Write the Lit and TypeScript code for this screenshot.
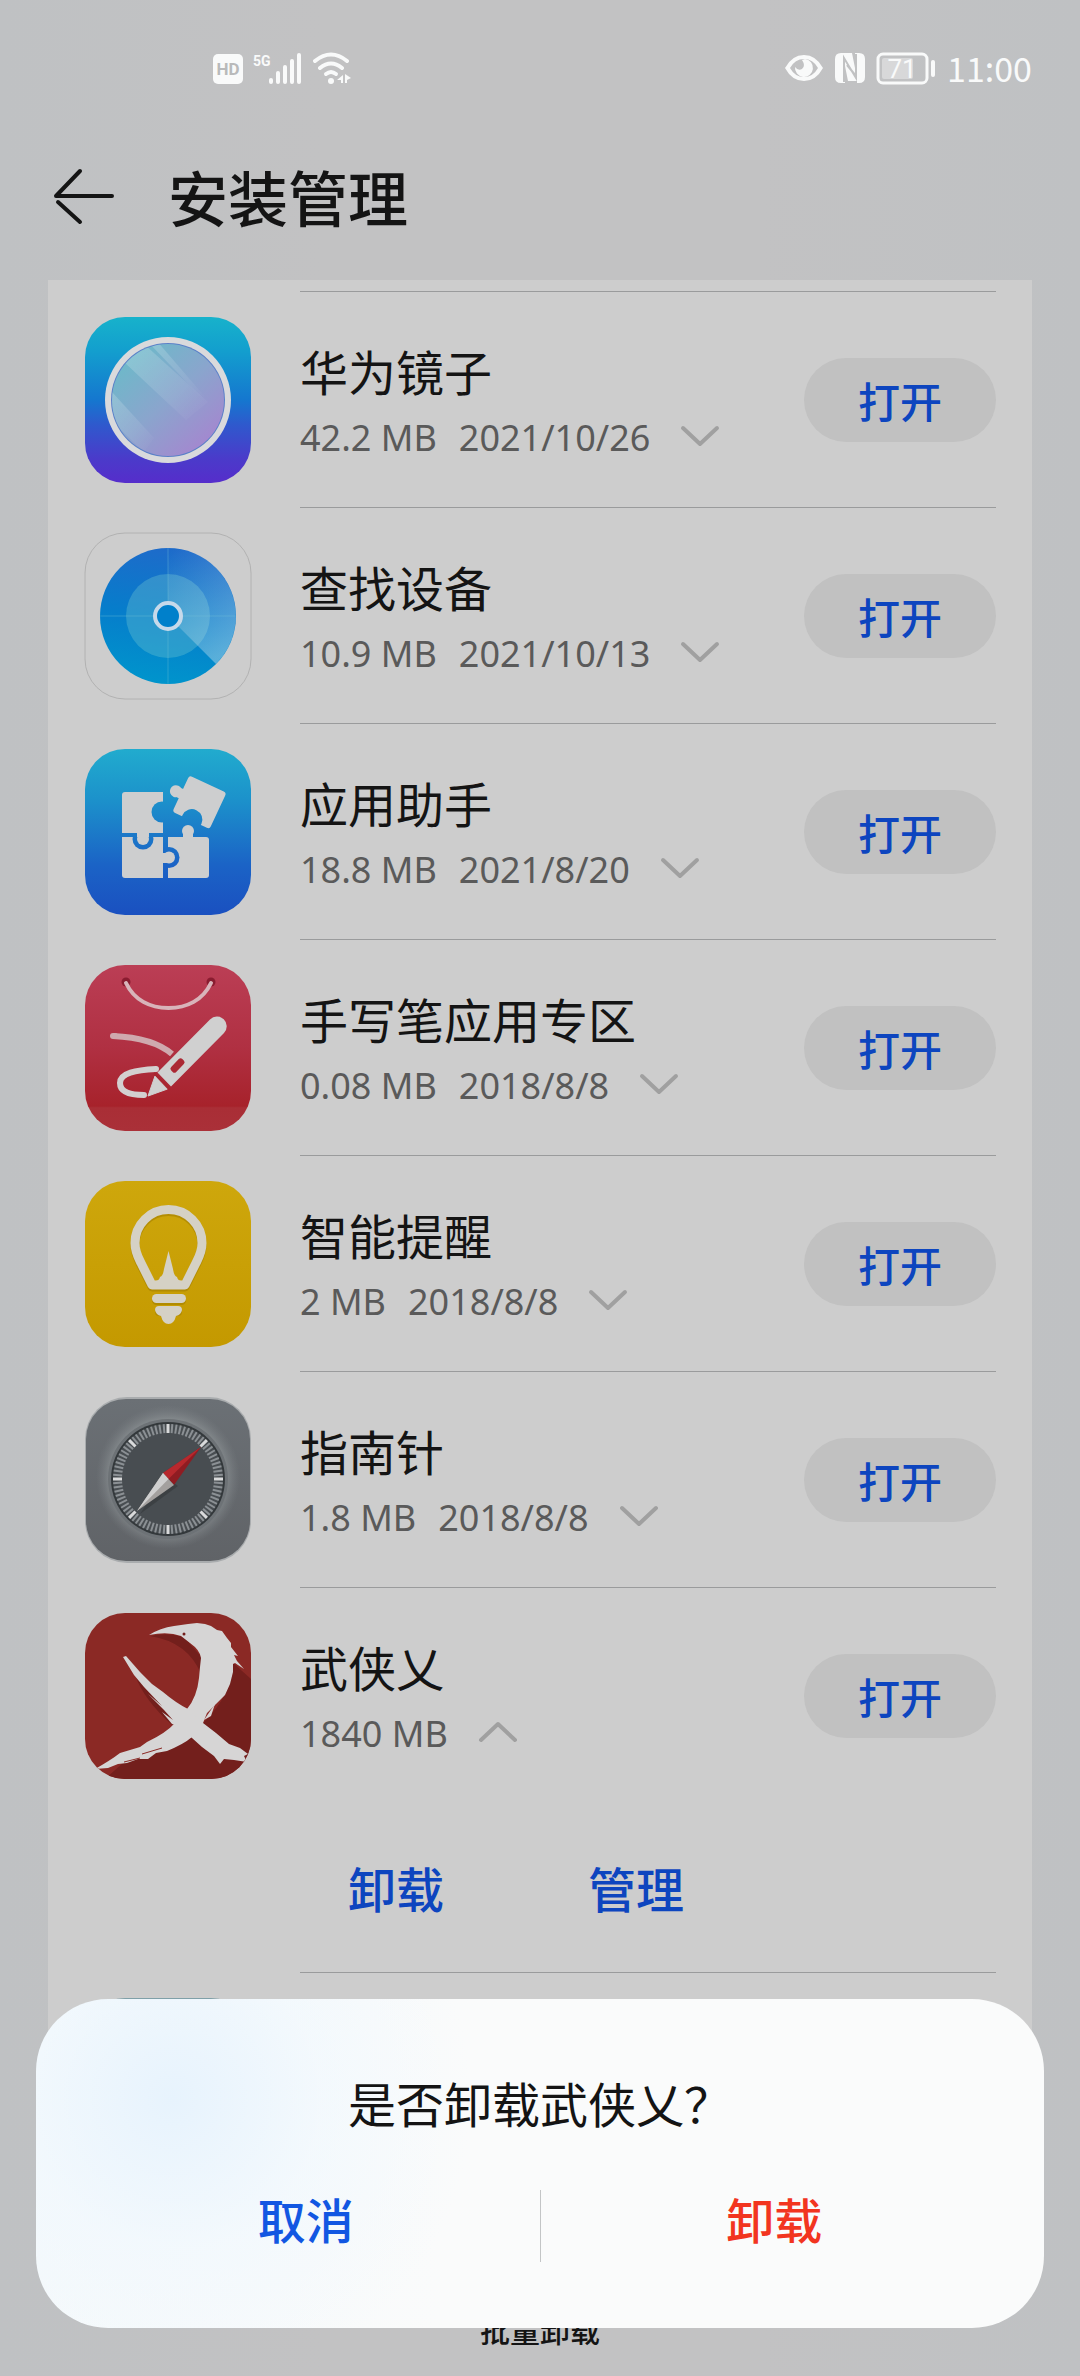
import { LitElement, html, svg, css, nothing, TemplateResult } from "lit";
import { customElement, property, state } from "lit/decorators.js";

type IconName =
  | "mirror"
  | "radar"
  | "puzzle"
  | "stylus"
  | "bulb"
  | "compass"
  | "brush"
  | "plain";

interface AppItem {
  icon: IconName;
  name: string;
  size: string;
  date?: string;
  expanded?: boolean;
}

const APPS: AppItem[] = [
  { icon: "mirror", name: "华为镜子", size: "42.2 MB", date: "2021/10/26" },
  { icon: "radar", name: "查找设备", size: "10.9 MB", date: "2021/10/13" },
  { icon: "puzzle", name: "应用助手", size: "18.8 MB", date: "2021/8/20" },
  { icon: "stylus", name: "手写笔应用专区", size: "0.08 MB", date: "2018/8/8" },
  { icon: "bulb", name: "智能提醒", size: "2 MB", date: "2018/8/8" },
  { icon: "compass", name: "指南针", size: "1.8 MB", date: "2018/8/8" },
  { icon: "brush", name: "武侠乂", size: "1840 MB", expanded: true },
];

const ticks = Array.from({ length: 80 }, (_, i) => ({
  angle: i * 4.5,
  major: i % 10 === 0,
}));

const tile = (fill: string) =>
  svg`<rect x="1" y="1" width="166" height="166" rx="40" fill=${fill} />`;

const ICONS: Record<IconName, () => TemplateResult> = {
  mirror: () => svg`
    <defs>
      <linearGradient id="bg" x1="0" y1="0" x2="0" y2="1">
        <stop offset="0" stop-color="#17b2cb" />
        <stop offset=".2" stop-color="#139fce" />
        <stop offset=".5" stop-color="#1577cf" />
        <stop offset=".65" stop-color="#2f59cd" />
        <stop offset=".85" stop-color="#4a3bca" />
        <stop offset="1" stop-color="#562dcb" />
      </linearGradient>
      <linearGradient id="glass" x1=".15" y1=".1" x2=".85" y2=".9">
        <stop offset="0" stop-color="#6db9c9" />
        <stop offset=".5" stop-color="#8aa5cd" />
        <stop offset="1" stop-color="#a487cf" />
      </linearGradient>
      <linearGradient id="shine" x1="0" y1="0" x2="1" y2="1">
        <stop offset="0" stop-color="#fff" stop-opacity=".22" />
        <stop offset="1" stop-color="#fff" stop-opacity="0" />
      </linearGradient>
      <clipPath id="disc"><circle cx="84" cy="84" r="56" /></clipPath>
    </defs>
    ${tile("url(#bg)")}
    <circle cx="84" cy="84" r="63" fill="#d9dadc" />
    <circle cx="84" cy="84" r="57" fill="#5a80c8" />
    <circle cx="84" cy="84" r="56" fill="url(#glass)" />
    <g clip-path="url(#disc)">
      <path d="M40 46L60 28L124 86L102 104Z" fill="url(#shine)" />
      <path d="M64 26L72 24L122 82L116 80Z" fill="url(#shine)" />
      <path d="M28 76L70 122L60 136L20 98Z" fill="url(#shine)" />
    </g>`,
  radar: () => svg`
    <defs>
      <linearGradient id="sea" x1=".5" y1="0" x2=".35" y2="1">
        <stop offset="0" stop-color="#1e6bca" />
        <stop offset=".5" stop-color="#067dcb" />
        <stop offset="1" stop-color="#0095cc" />
      </linearGradient>
      <linearGradient id="beam" x1=".1" y1="0" x2=".6" y2="1">
        <stop offset="0" stop-color="#cfe4ee" stop-opacity="0" />
        <stop offset="1" stop-color="#cfe4ee" stop-opacity=".42" />
      </linearGradient>
    </defs>
    <rect x="1" y="1" width="166" height="166" rx="40" fill="#cdcdcd" stroke="#b2b2b2" />
    <circle cx="84" cy="84" r="68" fill="url(#sea)" />
    <circle cx="84" cy="84" r="42" fill="#6fc6cf" fill-opacity=".36" />
    <path d="M84 84V16A68 68 0 0 1 132 132Z" fill="url(#beam)" />
    <path d="M84 16V152M16 84H152" stroke="#7cc2d6" stroke-opacity=".35" fill="none" />
    <circle cx="84" cy="84" r="13" fill="#0080cb" stroke="#c6d9ea" stroke-width="4" />`,
  puzzle: () => svg`
    <defs>
      <linearGradient id="bg" x1="0" y1="0" x2="0" y2="1">
        <stop offset="0" stop-color="#21abce" />
        <stop offset=".3" stop-color="#1c92cb" />
        <stop offset=".7" stop-color="#1b63c6" />
        <stop offset="1" stop-color="#1a50c0" />
      </linearGradient>
      <mask id="pieces">
        <rect width="168" height="168" fill="#000" />
        <rect x="84" y="89" width="41" height="41" rx="3" fill="#fff" />
        <rect x="84" y="89" width="12" height="41" fill="#fff" />
        <circle cx="85" cy="109.500" r="10.500" fill="#000" />
        <rect x="38" y="89" width="41" height="41" rx="3" fill="#fff" />
        <rect x="60" y="89" width="19" height="41" fill="#fff" />
        <rect x="38" y="89" width="41" height="10" fill="#fff" />
        <circle cx="59" cy="91" r="10.500" fill="#000" />
        <rect x="38" y="44" width="41" height="41" rx="3" fill="#fff" />
        <rect x="60" y="44" width="19" height="41" fill="#fff" />
        <rect x="38" y="60" width="41" height="25" fill="#fff" />
        <circle cx="78" cy="64" r="10.500" fill="#000" />
        <rect x="53" y="84" width="12" height="5" fill="#fff" />
        <circle cx="59" cy="91" r="6" fill="#fff" />
        <rect x="78" y="105" width="5" height="10" fill="#fff" />
        <circle cx="85" cy="109.500" r="6" fill="#fff" />
        <g transform="translate(115 54) rotate(25)">
          <rect x="-20" y="-20" width="41" height="40" rx="3" fill="#fff" />
          <circle cx="1" cy="19" r="10.500" fill="#000" />
          <rect x="-24" y="-5" width="6" height="10" fill="#fff" />
          <circle cx="-25.500" cy="0" r="6" fill="#fff" />
        </g>
        <rect x="99" y="85" width="10" height="5" fill="#fff" />
        <circle cx="104" cy="83" r="6" fill="#fff" />
      </mask>
    </defs>
    ${tile("url(#bg)")}
    <rect width="168" height="168" fill="#cdcecf" mask="url(#pieces)" />`,
  stylus: () => svg`
    <defs>
      <linearGradient id="bg" x1="0" y1="0" x2="0" y2="1">
        <stop offset="0" stop-color="#bb3e55" />
        <stop offset=".5" stop-color="#b03042" />
        <stop offset=".85" stop-color="#a7222b" />
        <stop offset=".86" stop-color="#a92e36" />
        <stop offset="1" stop-color="#aa3038" />
      </linearGradient>
    </defs>
    ${tile("url(#bg)")}
    <circle cx="42" cy="18" r="4.500" fill="#8a1c30" />
    <circle cx="127" cy="18" r="4.500" fill="#8a1c30" />
    <g fill="none" stroke-linecap="round">
      <path d="M42 19C50 36 66 44 84.500 44S119 36 127 19" stroke="#d8b4ba" stroke-width="4" />
      <path d="M29 72C52 73 74 78 88 90" stroke="#cfa9ae" stroke-width="6" stroke-linecap="butt" />
      <path d="M29 72H31" stroke="#cfa9ae" stroke-width="6" />
      <path d="M60 131C44 131 36 127 36 119C36 109 52 106 72 105" stroke="#d3d0d0" stroke-width="6" />
    </g>
    <path d="M73.500 108.500L126 55.500A9.500 9.500 0 0 1 140 69L87 122.500Z" fill="#d0d0d0" />
    <rect x="-8" y="-3.500" width="16" height="7" rx="2.500" transform="translate(93.500 101.500) rotate(-46)" fill="#ab2934" />
    <path d="M71 112L83.500 125L64 132Z" fill="#d0d0d0" stroke="#d0d0d0" stroke-linejoin="round" />
    <path d="M70 109L86 126" stroke="#a9262f" stroke-width="2" />`,
  bulb: () => svg`
    <defs>
      <linearGradient id="bg" x1="0" y1="0" x2="0" y2="1">
        <stop offset="0" stop-color="#cea70c" />
        <stop offset="1" stop-color="#c49900" />
      </linearGradient>
    </defs>
    ${tile("url(#bg)")}
    <g transform="translate(0 2)" fill="#a98400" stroke="none" opacity=".7">
      <path d="M68 105L57 83C54 77 51 72 51 63A33.500 33.500 0 0 1 118 63C118 72 115 77 112 83L101 105Z" fill="none" stroke="#a98400" stroke-width="9" stroke-linejoin="round" />
      <rect x="68" y="114" width="34" height="9" rx="4.500" />
      <rect x="71" y="126" width="27" height="8" rx="4" />
    </g>
    <path d="M68 105L57 83C54 77 51 72 51 63A33.500 33.500 0 0 1 118 63C118 72 115 77 112 83L101 105Z" fill="none" stroke="#d5d1c5" stroke-width="9" stroke-linejoin="round" />
    <path d="M84.500 71L80 89Q79 96 76 97Q75 101 71 101V106H98V101Q94 101 93 97Q90 96 89 89Z" fill="#d5d1c5" />
    <rect x="68" y="114" width="34" height="9" rx="4.500" fill="#d5d1c5" />
    <path d="M75 126H94Q98 126 98 130Q97 135 92 136Q90 144 84.500 144T77 136Q72 135 71 130Q71 126 75 126Z" fill="#d5d1c5" />`,
  compass: () => svg`
    <defs>
      <linearGradient id="bg" x1="0" y1="0" x2="0" y2="1">
        <stop offset="0" stop-color="#6b7075" />
        <stop offset="1" stop-color="#606367" />
      </linearGradient>
      <radialGradient id="halo">
        <stop offset=".75" stop-color="#92989a" stop-opacity=".9" />
        <stop offset="1" stop-color="#7b8084" stop-opacity="0" />
      </radialGradient>
    </defs>
    <rect x="1" y="1" width="166" height="166" rx="42" fill="#a9acae" />
    <rect x="2" y="3" width="164" height="162" rx="40" fill="url(#bg)" />
    <circle cx="84" cy="81" r="72" fill="url(#halo)" />
    <circle cx="84" cy="83" r="60" fill="#6d7276" />
    <circle cx="84" cy="83" r="57" fill="#33383b" />
    <circle cx="84" cy="83" r="55" fill="#484d51" />
    ${ticks.map(
      (t) => svg`<path
        d="M84 28V37"
        transform="rotate(${t.angle} 84 83)"
        stroke=${t.major ? "#d9dadb" : "#8b9094"}
        stroke-width=${t.major ? 3 : 2} />`
    )}
    <path d="M81 80L56 118L94 90Z" fill="#2f3336" opacity=".5" />
    <path d="M79 77L117 51L90 89Z" fill="#8f1c22" />
    <path d="M79 77L117 51L84.500 83Z" fill="#b8282d" />
    <path d="M79 77L53 115L90 89Z" fill="#a3a09e" />
    <path d="M79 77L53 115L84.500 83Z" fill="#cfcfcf" />`,
  brush: () => svg`
    <defs>
      <clipPath id="tile"><rect x="1" y="1" width="166" height="166" rx="40" /></clipPath>
    </defs>
    <g clip-path="url(#tile)">
      <rect width="168" height="168" fill="#8b2925" />
      <path d="M148 50L168 68V168H20L40 150L110 122L120 110Q150 80 148 50Z" fill="#731f1c" />
      <path d="M66 24Q84 20 100 25L120 48L117 62Q104 30 66 24Z" fill="#731f1c" />
      <path d="M51 63Q60 88 88 113L96 108Q70 86 56 62Z" fill="#731f1c" />
      <path d="M65 23Q76 16 90 14L104 12L113 11L121 12L127 14L133 18L138 19L143 26L147 31L147 35L154 44L150 43L153 49L160 57L151 51L149 52L149 60L146 72L141 83L132 92L123 101L119 111L108 125Q100 132 83 139L72 141L64 147L54 147L43 151L34 152L24 156L11 157Q27 148 36 141L56 135L63 130Q82 121 91 111L103 97Q113 85 115 66L116 55L117 46Q116 38 106 31L97 24Q84 19 65 23Z" fill="#d6d5d5" />
      <path d="M39 45L42 44L56 60L68 72L79 80Q92 91 104 97L119 111L132 121L145 132L156 136L164 142L160 144L163 150L150 148L140 147L136 152L130 144L118 135L108 126L96 114L88 112L78 100L89 108L80 98L64 82L78 94L60 75L50 63Z" fill="#d6d5d5" />
      <path d="M120 108L131 92L127 104Z" fill="#d6d5d5" />
      <path d="M58 142L78 136M40 150L56 146" stroke="#8b2925" fill="none" />
      <circle cx="100" cy="22" r="1.500" fill="#731f1c" />
    </g>`,
  plain: () => tile("#7fa0a8"),
};

@customElement("app-icon")
class AppIcon extends LitElement {
  @property() name: IconName = "plain";

  static styles = css`
    :host {
      display: block;
      width: 168px;
      height: 168px;
    }
    .art {
      display: block;
      width: 100%;
      height: 100%;
    }
  `;

  render() {
    return html`<svg class="art" viewBox="0 0 168 168" aria-hidden="true">
      ${ICONS[this.name]()}
    </svg>`;
  }
}

@customElement("status-bar")
class StatusBar extends LitElement {
  static styles = css`
    :host {
      display: flex;
      align-items: center;
      height: 36px;
      padding: 50px 48px;
      padding-left: 213px;
      color: #f9fafa;
      fill: currentColor;
    }
    .group {
      display: flex;
      align-items: center;
      gap: 10px;
    }
    .right {
      margin-left: auto;
      gap: 11px;
    }
    .small {
      font-family: Roboto, "Liberation Sans", sans-serif;
      font-weight: 700;
    }
    .level {
      font-family: Roboto, "Liberation Sans", sans-serif;
      font-size: 26px;
      font-weight: 400;
    }
    .clock {
      font: 400 34px/36px "Noto Sans CJK SC", sans-serif;
    }
    .line {
      fill: none;
      stroke: currentColor;
      stroke-linecap: round;
    }
  `;

  render() {
    return html`
      <div class="group">
        <svg width="30" height="32" viewBox="0 0 30 32">
          <rect y="2" width="30" height="30" rx="5" />
          <text class="small" x="15" y="23" font-size="17" fill="#b9babb" text-anchor="middle">HD</text>
        </svg>
        <svg width="50" height="32" viewBox="0 0 50 32">
          <text class="small" x="0" y="14" font-size="14">5G</text>
          <rect x="16" y="26" width="4" height="6" rx="2" />
          <rect x="23" y="19" width="4" height="13" rx="2" />
          <rect x="30" y="13" width="4" height="19" rx="2" />
          <rect x="37" y="7" width="4" height="25" rx="2" />
          <rect x="44" y="1" width="4" height="31" rx="2" />
        </svg>
        <svg width="40" height="32" viewBox="0 0 40 32">
          <path class="line" stroke-width="4" d="M2 9Q18 -4 34 9M7 16Q18 7 29 16" />
          <path class="line" stroke-width="4" d="M13 22Q18 18 23 22" />
          <circle cx="18" cy="29" r="3" />
          <path d="M30 23V31H28V28H24ZM32 22L38 26L34 28V31H32Z" />
        </svg>
      </div>
      <div class="group right">
        <svg width="40" height="32" viewBox="0 0 40 32">
          <path fill-rule="evenodd" d="M1 16Q8 3 20 3T39 16Q32 29 20 29T1 16ZM6 16Q11 25 20 25T34 16Q29 7 20 7T6 16Z" />
          <path d="M21 7A9 9 0 1 1 11 15Q14 19 18 17Q22 14 18 8Z" />
        </svg>
        <svg width="30" height="32" viewBox="0 0 30 32">
          <path d="M6 1H8V31H6Q0 31 0 25V7Q0 1 6 1ZM24 31H22V1H24Q30 1 30 7V25Q30 31 24 31Z" />
          <path d="M7 1H17L20 16V1H23V29H13L10 14V31H7Z" />
          <path d="M9 30V6L21 26V2M21 24L12 13" fill="none" stroke="#c1c2c3" stroke-width="2" />
        </svg>
        <svg width="60" height="40" viewBox="0 -4 60 40">
          <rect x="2" y="2" width="49" height="29" rx="5" fill="none" stroke="currentColor" stroke-width="3" />
          <rect x="6" y="6" width="31" height="21" rx="2" opacity=".4" />
          <text class="level" x="26" y="26" text-anchor="middle">71</text>
          <rect x="55" y="8" width="4" height="17" rx="2" />
        </svg>
        <time class="clock">11:00</time>
      </div>
    `;
  }
}

@customElement("app-row")
class AppRow extends LitElement {
  @property({ attribute: false }) item!: AppItem;
  @state() private open = false;

  static styles = css`
    :host {
      display: grid;
      grid-template-columns: 168px minmax(0, 1fr);
      column-gap: 48px;
    }
    .line {
      grid-column: 2;
      height: 1px;
      background: #9a9b9c;
    }
    .row {
      grid-column: 1 / -1;
      display: flex;
      align-items: center;
      gap: 48px;
      padding: 24px 0 23px;
    }
    .info {
      flex: 1;
      min-width: 0;
    }
    .name {
      margin: 0 0 12px;
      font-size: 48px;
      font-weight: 400;
      line-height: 64px;
      color: #141414;
    }
    .meta {
      display: flex;
      align-items: center;
      gap: 22px;
      font-family: "Noto Sans", "Noto Sans CJK SC", sans-serif;
      font-size: 36px;
      line-height: 48px;
      color: #5a5a5a;
    }
    button {
      border: 0;
      padding: 0;
      background: none;
      font: inherit;
    }
    .toggle {
      display: block;
      margin-left: 4px;
      line-height: 0;
    }
    .chevron {
      display: block;
      width: 48px;
      height: 48px;
      fill: none;
      stroke: #a0a0a0;
      stroke-width: 4;
      stroke-linecap: round;
      stroke-linejoin: round;
    }
    .open {
      width: 192px;
      height: 84px;
      border-radius: 42px;
      background: #c1c1c1;
      font-size: 42px;
      font-weight: 500;
      line-height: 84px;
      color: #0d45bf;
    }
    .actions {
      grid-column: 2;
      display: flex;
      gap: 48px;
      padding: 48px 0 49px;
    }
    .action {
      width: 192px;
      font-size: 48px;
      font-weight: 500;
      line-height: 72px;
      color: #0d45bf;
    }
  `;

  willUpdate(changed: Map<string, unknown>) {
    if (changed.has("item")) this.open = !!this.item.expanded;
  }

  render() {
    const { icon, name, size, date } = this.item;
    return html`
      <div class="line"></div>
      <div class="row">
        <app-icon .name=${icon}></app-icon>
        <div class="info">
          <h2 class="name">${name}</h2>
          <div class="meta">
            <span>${size}</span>
            ${date ? html`<span>${date}</span>` : nothing}
            <button
              class="toggle"
              aria-expanded=${this.open ? "true" : "false"}
              aria-label=${name}
              @click=${() => (this.open = !this.open)}
            >
              <svg class="chevron" viewBox="0 0 48 48">
                <path d=${this.open ? "M7 30L24 14L41 30" : "M7 14L24 30L41 14"} />
              </svg>
            </button>
          </div>
        </div>
        <button class="open">打开</button>
      </div>
      ${this.open
        ? html`<div class="actions">
            <button class="action">卸载</button>
            <button class="action">管理</button>
          </div>`
        : nothing}
    `;
  }
}

@customElement("app-root")
class AppRoot extends LitElement {
  static styles = css`
    :host {
      position: relative;
      display: flex;
      flex-direction: column;
      height: 100vh;
      overflow: hidden;
      background: linear-gradient(90deg, #bfc1c3, #c2c2c3 30%, #c2c2c3 70%, #bfc1c3);
      font-family: "Noto Sans CJK SC", sans-serif;
      color: #141414;
    }
    button {
      border: 0;
      padding: 0;
      background: none;
      font: inherit;
    }
    .header {
      display: flex;
      align-items: center;
      gap: 48px;
      height: 120px;
      padding: 0 48px;
    }
    .back {
      width: 72px;
      height: 72px;
    }
    .arrow {
      display: block;
      fill: none;
      stroke: #141414;
      stroke-width: 4;
      stroke-linecap: round;
    }
    .title {
      margin: 0;
      font-size: 60px;
      font-weight: 500;
      line-height: 72px;
    }
    .card {
      flex: 1;
      min-height: 0;
      overflow: hidden;
      margin: 24px 48px 0;
      padding: 11px 36px 0;
      background: #cdcdcd;
    }
    .list {
      margin: 0;
      padding: 0;
      list-style: none;
    }
    .next {
      display: grid;
      grid-template-columns: 168px minmax(0, 1fr);
      column-gap: 48px;
      row-gap: 24px;
    }
    .line {
      grid-column: 2;
      height: 1px;
      background: #9a9b9c;
    }
    .footer {
      display: flex;
      align-items: center;
      justify-content: center;
      height: 94px;
    }
    .batch {
      font-size: 30px;
      font-weight: 500;
      line-height: 40px;
      color: #141414;
    }
    .dialog {
      position: absolute;
      left: 36px;
      right: 36px;
      bottom: 48px;
      padding: 75px 36px 66px;
      border-radius: 72px;
      background:
        radial-gradient(circle 300px at 136px 100px, #e7f3fd, rgba(240, 248, 254, 0.6) 50%, rgba(250, 251, 251, 0)),
        linear-gradient(90deg, #f5f9fb, #fafbfb 40%);
    }
    .question {
      margin: 0 0 60px;
      font-size: 48px;
      font-weight: 400;
      line-height: 56px;
      text-align: center;
    }
    .choices {
      display: flex;
      align-items: flex-start;
    }
    .choice {
      flex: 1;
      font-size: 48px;
      font-weight: 500;
      line-height: 56px;
    }
    .cancel {
      color: #1257e2;
    }
    .remove {
      color: #f2351f;
    }
    .divider {
      width: 1px;
      height: 72px;
      background: #c3c5c6;
    }
  `;

  render() {
    return html`
      <status-bar></status-bar>
      <header class="header">
        <button class="back" aria-label="返回">
          <svg class="arrow" width="72" height="72" viewBox="0 0 72 72">
            <path d="M64 36H8L32 11M10 42L32 62" stroke-linejoin="round" />
          </svg>
        </button>
        <h1 class="title">安装管理</h1>
      </header>
      <main class="card">
        <ul class="list">
          ${APPS.map((item) => html`<li><app-row .item=${item}></app-row></li>`)}
          <li class="next">
            <div class="line"></div>
            <app-icon></app-icon>
          </li>
        </ul>
      </main>
      <footer class="footer">
        <button class="batch">批量卸载</button>
      </footer>
      <section class="dialog" role="dialog" aria-labelledby="question">
        <p class="question" id="question">是否卸载武侠乂？</p>
        <div class="choices">
          <button class="choice cancel">取消</button>
          <span class="divider"></span>
          <button class="choice remove">卸载</button>
        </div>
      </section>
    `;
  }
}
